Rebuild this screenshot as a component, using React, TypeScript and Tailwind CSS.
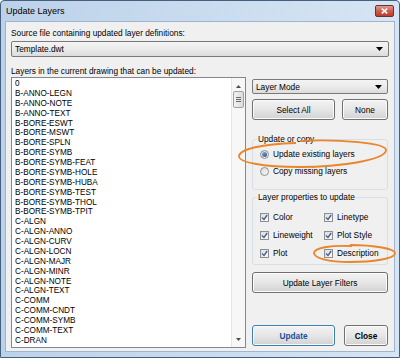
import React from "react";

const layers = [
  "0",
  "B-ANNO-LEGN",
  "B-ANNO-NOTE",
  "B-ANNO-TEXT",
  "B-BORE-ESWT",
  "B-BORE-MSWT",
  "B-BORE-SPLN",
  "B-BORE-SYMB",
  "B-BORE-SYMB-FEAT",
  "B-BORE-SYMB-HOLE",
  "B-BORE-SYMB-HUBA",
  "B-BORE-SYMB-TEST",
  "B-BORE-SYMB-THOL",
  "B-BORE-SYMB-TPIT",
  "C-ALGN",
  "C-ALGN-ANNO",
  "C-ALGN-CURV",
  "C-ALGN-LOCN",
  "C-ALGN-MAJR",
  "C-ALGN-MINR",
  "C-ALGN-NOTE",
  "C-ALGN-TEXT",
  "C-COMM",
  "C-COMM-CNDT",
  "C-COMM-SYMB",
  "C-COMM-TEXT",
  "C-DRAN",
];

const Arrow = () => (
  <svg width="7" height="4" viewBox="0 0 7 4">
    <path d="M0 0 H7 L3.5 4 Z" fill="#000" />
  </svg>
);

const Combo: React.FC<{ label: string; className?: string }> = ({ label, className }) => (
  <div
    className={`flex items-center justify-between pl-[3px] pr-[5px] border border-[#7a7a7a] rounded-[2px] bg-gradient-to-b from-[#f4f4f4] via-[#ebebeb] to-[#dcdcdc] ${className ?? ""}`}
  >
    <span>{label}</span>
    <Arrow />
  </div>
);

const Button: React.FC<{ children: React.ReactNode; className?: string; primary?: boolean }> = ({
  children,
  className,
  primary,
}) => (
  <div
    className={`flex items-center justify-center rounded-[3px] border ${
      primary ? "border-[#3c7fb1] text-[#1c4f9e] font-bold" : "border-[#707070]"
    } bg-gradient-to-b from-[#f3f3f3] via-[#e6e6e6] to-[#d2d2d2] shadow-[inset_0_0_0_1px_#fbfbfb] ${className ?? ""}`}
  >
    {children}
  </div>
);

const Check = () => (
  <span className="w-[9px] h-[9px] border border-[#8f8f8f] bg-gradient-to-br from-[#dcdcdc] to-[#fbfbfb] flex items-center justify-center">
    <svg width="7" height="7" viewBox="0 0 7 7">
      <path d="M1 3.5 L3 5.5 L6.2 1" stroke="#4a5f97" strokeWidth="1.4" fill="none" />
    </svg>
  </span>
);

const Radio: React.FC<{ on?: boolean }> = ({ on }) => (
  <span className="w-[9px] h-[9px] rounded-full border border-[#8f8f8f] bg-gradient-to-br from-[#d8d8d8] to-[#fafafa] flex items-center justify-center">
    {on && <span className="w-[5px] h-[5px] rounded-full bg-gradient-to-br from-[#8fb4e0] to-[#1f4d8c]" />}
  </span>
);

export default function App() {
  return (
    <div
      className="relative w-[400px] h-[358px] overflow-hidden bg-white text-[8.3px] leading-[10px] text-black"
      style={{ fontFamily: '"Liberation Sans", Arial, sans-serif' }}
    >
      <div className="w-full h-full flex flex-col border border-[#44607e] rounded-t-[4px] bg-gradient-to-r from-[#bcd2ea] to-[#d6e5f4]">
        {/* Title bar */}
        <div className="h-[20px] flex items-center justify-between pl-[5px] pr-[5px] shrink-0">
          <span className="text-[9px] text-black">Update Layers</span>
          <div className="w-[19px] h-[12px] mt-[-1px] rounded-[2px] border border-[#6d3131] bg-gradient-to-b from-[#e29a90] via-[#cf5a4c] to-[#c0392b] flex items-center justify-center">
            <svg width="7" height="6" viewBox="0 0 7 6">
              <path d="M0.8 0.6 L6.2 5.4 M6.2 0.6 L0.8 5.4" stroke="#fff" strokeWidth="1.6" />
            </svg>
          </div>
        </div>

        {/* Client area */}
        <div className="flex-1 mx-[4px] mb-[5px] bg-[#f0f0f0] border border-[#9fb5cd] px-[5px] pt-[6px] flex flex-col">
          <div>Source file containing updated layer definitions:</div>
          <Combo label="Template.dwt" className="mt-[3px] h-[16px]" />
          <div className="mt-[9px]">Layers in the current drawing that can be updated:</div>

          <div className="mt-[1px] flex gap-[6px]">
            {/* Layer list */}
            <div className="w-[235px] h-[271px] bg-white border border-[#828790] flex">
              <div className="flex-1 pl-[3px] pt-[1px] leading-[9.88px] text-[8.2px]">
                {layers.map((l) => (
                  <div key={l}>{l}</div>
                ))}
              </div>
              <div className="w-[14px] bg-[#f7f7f7] border-l border-[#e6e6e6] flex flex-col items-center">
                <svg width="5" height="3" viewBox="0 0 5 3" className="mt-[7px]">
                  <path d="M0 3 L2.5 0 L5 3 Z" fill="#4d4d4d" />
                </svg>
                <div className="mt-[3px] w-[11px] h-[17px] rounded-[2px] border border-[#a0a0a0] bg-gradient-to-r from-[#f2f2f2] to-[#dcdcdc] flex flex-col items-center justify-center gap-[1px]">
                  <span className="w-[5px] h-px bg-[#6a6a6a]" />
                  <span className="w-[5px] h-px bg-[#6a6a6a]" />
                  <span className="w-[5px] h-px bg-[#6a6a6a]" />
                </div>
                <div className="flex-1" />
                <svg width="5" height="3" viewBox="0 0 5 3" className="mb-[6px]">
                  <path d="M0 0 L2.5 3 L5 0 Z" fill="#4d4d4d" />
                </svg>
              </div>
            </div>

            {/* Right panel */}
            <div className="w-[136px] flex flex-col pt-[2px]">
              <Combo label="Layer Mode" className="h-[15px]" />
              <div className="mt-[5px] flex gap-[7px]">
                <Button className="w-[83px] h-[21px]">Select All</Button>
                <Button className="flex-1 h-[21px]">None</Button>
              </div>

              <fieldset className="mt-[14px] h-[56px] border border-[#d5dfe5] rounded-[3px] pl-[7px] pr-[4px]">
                <legend className="px-[1px] ml-[-3px]">Update or copy</legend>
                <div className="mt-[5px] flex items-center gap-[4px]">
                  <Radio on />
                  <span>Update existing layers</span>
                </div>
                <div className="mt-[7px] flex items-center gap-[4px]">
                  <Radio />
                  <span>Copy missing layers</span>
                </div>
              </fieldset>

              <fieldset className="mt-[2px] h-[73px] border border-[#d5dfe5] rounded-[3px] pl-[7px] pr-[4px]">
                <legend className="px-[1px] ml-[-3px]">Layer properties to update</legend>
                <div className="mt-[10px] grid grid-cols-[64px_1fr] gap-y-[8px]">
                  {["Color", "Linetype", "Lineweight", "Plot Style", "Plot", "Description"].map((p) => (
                    <div key={p} className="flex items-center gap-[4px]">
                      <Check />
                      <span>{p}</span>
                    </div>
                  ))}
                </div>
              </fieldset>

              <Button className="mt-[7px] h-[21px]">Update Layer Filters</Button>

              <div className="mt-[32px] flex gap-[9px]">
                <Button primary className="w-[83px] h-[21px]">
                  Update
                </Button>
                <Button className="flex-1 h-[21px] font-bold">Close</Button>
              </div>
            </div>
          </div>
        </div>
      </div>

      {/* Orange hand-drawn highlights */}
      <svg className="absolute inset-0 pointer-events-none" width="400" height="358" viewBox="0 0 400 358">
        <path
          d="M 300 141 C 340 139, 386 143, 386 150 C 386 160, 340 167, 300 167 C 262 167, 238 162, 239 156 C 240 149, 262 144, 296 143"
          stroke="#e9852b"
          strokeWidth="1.8"
          fill="none"
        />
        <path
          d="M 350 245 C 375 245, 395 249, 395 253 C 395 259, 372 262, 350 262 C 328 262, 314 258, 314 253 C 314 248, 330 245, 352 246"
          stroke="#e9852b"
          strokeWidth="1.8"
          fill="none"
        />
      </svg>
    </div>
  );
}
